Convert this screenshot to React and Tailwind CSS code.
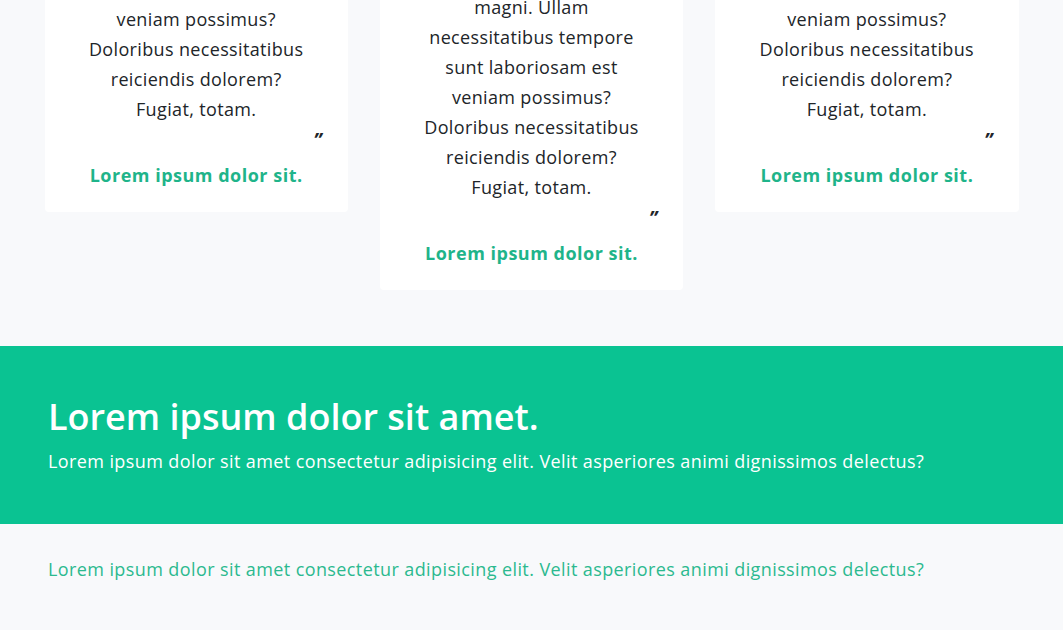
import React from 'react'

const cards = [
  {
    offset: 'mt-3',
    lines: ['veniam possimus?', 'Doloribus necessitatibus', 'reiciendis dolorem?', 'Fugiat, totam.'],
  },
  {
    offset: '',
    lines: [
      'magni. Ullam',
      'necessitatibus tempore',
      'sunt laboriosam est',
      'veniam possimus?',
      'Doloribus necessitatibus',
      'reiciendis dolorem?',
      'Fugiat, totam.',
    ],
  },
  {
    offset: 'mt-3',
    lines: ['veniam possimus?', 'Doloribus necessitatibus', 'reiciendis dolorem?', 'Fugiat, totam.'],
  },
]

function Testimonial({ lines, offset }) {
  return (
    <div className={`bg-white rounded px-6 pt-6 pb-[23px] ${offset}`}>
      <div className="text-center text-[18px] leading-[30px] tracking-[0.35px] text-[#212529]">
        {lines.map((l, i) => (
          <div key={i}>{l}</div>
        ))}
      </div>
      <div className="text-right h-6 pt-1 leading-6 text-[19px] font-bold italic text-[#212529] pr-0.5">”</div>
      <div className="mt-[13px] text-center text-[18px] leading-[28px] tracking-[0.5px] font-bold text-[#1fb48a]">
        Lorem ipsum dolor sit.
      </div>
    </div>
  )
}

export default function App() {
  return (
    <div className="h-[630px] overflow-hidden bg-[#f8f9fb]" style={{ fontFamily: '"Open Sans", sans-serif' }}>
      <section className="-mt-[32px] pb-14">
        <div className="mx-auto w-[974px] grid grid-cols-3 gap-8 items-start">
          {cards.map((c, i) => (
            <Testimonial key={i} {...c} />
          ))}
        </div>
      </section>
      <section className="bg-[#0ac392] h-[178px] flex flex-col justify-center px-12 text-white">
        <h2 className="text-[36px] leading-[44px] font-semibold">Lorem ipsum dolor sit amet.</h2>
        <p className="mt-2 text-[18px] leading-[28px] tracking-[0.4px]">
          Lorem ipsum dolor sit amet consectetur adipisicing elit. Velit asperiores animi dignissimos delectus?
        </p>
      </section>
      <section className="px-12 pt-[31px]">
        <p className="text-[18px] leading-[28px] tracking-[0.4px] text-[#2cb98f]">
          Lorem ipsum dolor sit amet consectetur adipisicing elit. Velit asperiores animi dignissimos delectus?
        </p>
      </section>
    </div>
  )
}
